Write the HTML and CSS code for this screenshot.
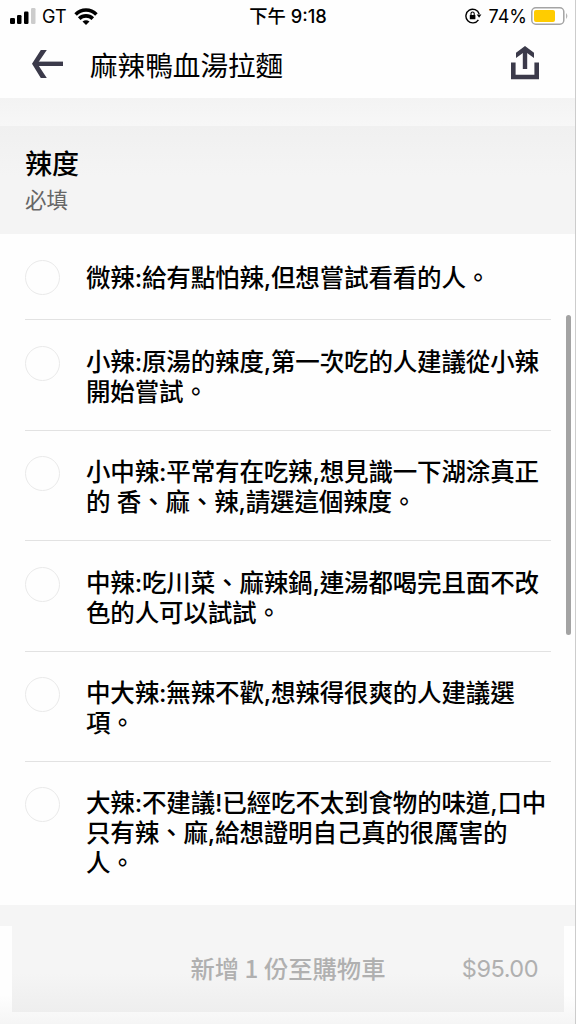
FILE: index.html
```html
<!DOCTYPE html>
<html lang="zh-Hant">

<head>
    <meta charset="UTF-8">
    <meta name="viewport" content="width=device-width, initial-scale=1.0">
    <title>麻辣鴨血湯拉麵</title>
    <link rel="stylesheet" href="styles.css">
</head>

<body>
    <div class="status">
        <div class="status-left">
            <svg width="26" height="16" viewBox="0 0 26 16">
                <rect x="0" y="10" width="5" height="6" rx="1.2" />
                <rect x="7" y="7" width="4.5" height="9" rx="1.2" />
                <rect x="14" y="3.5" width="4.5" height="12.5" rx="1.2" />
                <rect x="21" y="0" width="4.5" height="16" rx="1.2" fill="#ccc" />
            </svg>
            <span class="carrier">GT</span>
            <svg class="wifi" width="24" height="17" viewBox="0 0 24 17" fill="none" stroke="#000" stroke-width="3.6">
                <path d="M1.6 6.4C7.4 0.6 16.6 0.6 22.4 6.4" />
                <path d="M5.2 10.6C9 6.9 15 6.9 18.8 10.6" />
                <path d="M8.5 13.6Q12 10.8 15.5 13.6L12 17Z" fill="#000" stroke="none" />
            </svg>
        </div>
        <span class="clock">下午 9:18</span>
        <div class="status-right">
            <svg width="17" height="16" viewBox="0 0 17 16">
                <path d="M13.4 11.8A6.8 6.8 0 1 1 14.2 6" fill="none" stroke="#000" stroke-width="1.4" />
                <path d="M11.7 6.4H16.4L14.1 9.8Z" />
                <rect x="4.8" y="7" width="5.6" height="4.3" rx=".5" />
                <path d="M6 7.4V5.6a1.6 1.6 0 0 1 3.2 0V7.4" fill="none" stroke="#000" stroke-width="1.1" />
            </svg>
            <span class="percent">74%</span>
            <svg width="38" height="18" viewBox="0 0 38 18">
                <rect x=".8" y=".8" width="32" height="16.4" rx="4" fill="#fff" stroke="#a4a4a4" stroke-width="1.5" />
                <rect x="3" y="3" width="21" height="12" rx="2" fill="#fc0" />
                <path d="M35.2 6Q37.4 9 35.2 12Z" fill="#a4a4a4" />
            </svg>
        </div>
    </div>
    <header>
        <svg width="32" height="28" viewBox="0 0 32 28" fill="none" stroke="#3b3a4a">
            <path d="M2 13.8H31" stroke-width="4.4" />
            <path d="M8.8 0H14.8L5.4 13.8L14.8 28H8.8L0 13.8Z" fill="#3b3a4a" stroke="none" />
        </svg>
        <h1>麻辣鴨血湯拉麵</h1>
        <svg class="share" width="28" height="34" viewBox="0 0 28 34" fill="none" stroke="#3b3a4a">
            <path d="M2.3 16.5V31H25.7V16.5" stroke-width="4.6" />
            <path d="M14 23V4" stroke-width="4.4" />
            <path d="M14 0L23 6.8V12L14 5.6L5 12V6.8Z" fill="#3b3a4a" stroke="none" />
        </svg>
    </header>
    <div class="gap"></div>
    <section>
        <div class="group">
            <h2>辣度</h2>
            <p>必填</p>
        </div>
        <ul>
            <li class="single"><span class="radio"></span><span class="label">微辣:給有點怕辣,但想嘗試看看的人。</span></li>
            <li><span class="radio"></span><span class="label">小辣:原湯的辣度,第一次吃的人建議從小辣<br>開始嘗試。</span></li>
            <li><span class="radio"></span><span class="label">小中辣:平常有在吃辣,想見識一下湖涂真正<br>的 香、麻、辣,請選這個辣度。</span></li>
            <li><span class="radio"></span><span class="label">中辣:吃川菜、麻辣鍋,連湯都喝完且面不改<br>色的人可以試試。</span></li>
            <li><span class="radio"></span><span class="label">中大辣:無辣不歡,想辣得很爽的人建議選<br>項。</span></li>
            <li class="triple"><span class="radio"></span><span class="label">大辣:不建議!已經吃不太到食物的味道,口中<br>只有辣、麻,給想證明自己真的很厲害的<br>人。</span></li>
        </ul>
    </section>
    <footer>
        <div class="add">
            <span class="add-text">新增 1 份至購物車</span>
            <span class="price">$95.00</span>
        </div>
    </footer>
    <div class="scrollbar"></div>
    <div class="edge"></div>
</body>

</html>
```
FILE: styles.css
```css
* {
    padding: 0;
    margin: 0;
    box-sizing: border-box;
}

body {
    width: 576px;
    height: 1024px;
    overflow: hidden;
    position: relative;
    background: #fefefe;
    color: #000;
    font-family: Inter, 'Noto Sans CJK TC', sans-serif;
}

svg {
    display: block;
    flex: none;
}

.status {
    height: 32px;
    padding: 0 7px 0 10px;
    display: grid;
    grid-template-columns: 1fr auto 1fr;
    align-items: center;
}

.status-left,
.status-right {
    display: flex;
    align-items: center;
}

.status-right {
    justify-content: flex-end;
}

.carrier {
    margin: 0 7px 0 6px;
    font-size: 18px;
}

.clock {
    padding-right: 3px;
    font-size: 18.3px;
    line-height: 32px;
    font-weight: 500;
    white-space: nowrap;
}

.percent {
    margin: 0 4px 0 7px;
    font-size: 18px;
}

header {
    height: 66px;
    padding: 0 37px 2px 32px;
    display: flex;
    align-items: center;
}

h1 {
    margin-left: 26px;
    font-size: 27.6px;
    line-height: 40px;
    font-weight: 400;
    font-family: 'Noto Sans CJK TC', sans-serif;
}

.share {
    margin-left: auto;
    margin-bottom: 3px;
}

.gap {
    height: 28px;
    background: linear-gradient(#f3f3f3, #f7f7f7);
}

.group {
    height: 108px;
    padding: 17px 25px 0;
    background: linear-gradient(#f0f0f0, #f4f4f4 50px);
    font-family: 'Noto Sans CJK TC', sans-serif;
}

h2 {
    font-size: 27px;
    line-height: 40px;
    font-weight: 500;
}

.group p {
    font-size: 21.5px;
    line-height: 32px;
    color: #666;
}

ul {
    padding: 0 25px;
    list-style: none;
}

li {
    height: 110.5px;
    padding-top: 25.5px;
    display: flex;
    border-bottom: 1px solid #e2e2e2;
}

li.single {
    height: 86px;
    padding-top: 26px;
}

li.triple {
    height: 143px;
    padding-top: 25px;
    border: none;
}

.radio {
    width: 35px;
    height: 35px;
    flex: none;
    margin-right: 26px;
    border: 1.5px solid #eaeaea;
    border-radius: 50%;
}

.label {
    padding-top: 1px;
    font-size: 24.5px;
    line-height: 30px;
    font-weight: 500;
    letter-spacing: -0.15px;
    white-space: nowrap;
}

.single .label {
    padding-top: 3px;
}

footer {
    height: 119px;
    padding: 21px 12px 12px;
    background: linear-gradient(#f5f5f5 21px, #fefefe 21px, #fefefe 90px, #f5f5f5);
}

.add {
    height: 86px;
    padding: 0 26px;
    display: grid;
    grid-template-columns: 1fr auto 1fr;
    align-items: center;
    background: linear-gradient(#f5f5f5 55%, #eee);
    color: #b0b0b0;
}

.add-text {
    grid-column: 2;
    padding-bottom: 4px;
    font-family: 'Noto Sans CJK TC', sans-serif;
    font-size: 24.3px;
    font-weight: 500;
}

.price {
    padding-bottom: 2px;
    text-align: right;
    font-size: 23.5px;
    letter-spacing: -0.5px;
}

/* sits over the scrolling list */
.scrollbar {
    position: absolute;
    top: 315px;
    right: 5px;
    width: 5px;
    height: 320px;
    border-radius: 3px;
    background: #a3a3a3;
}

.edge {
    position: absolute;
    top: 0;
    right: 0;
    width: 1px;
    height: 100%;
    background: #ccc;
}
```
